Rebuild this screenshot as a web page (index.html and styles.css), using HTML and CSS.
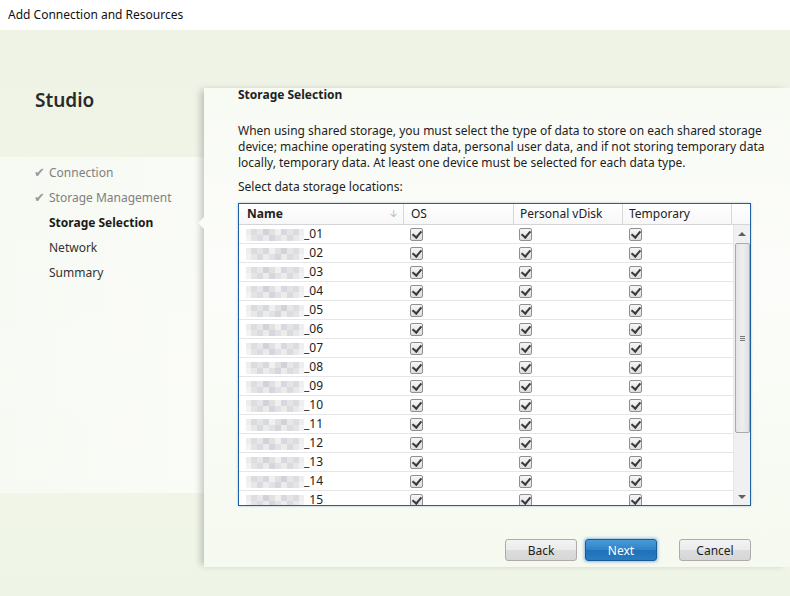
FILE: index.html
```html
<!DOCTYPE html>
<html lang="en">
<head>
    <meta charset="UTF-8">
    <title>Add Connection and Resources</title>
    <link rel="stylesheet" href="styles.css">
</head>
<body>
    <div class="titlebar">Add Connection and Resources</div>

    <div class="wizard">
        <div class="sidebar">
            <h1 class="brand">Studio</h1>
            <ul class="steps">
                <li class="step done">Connection</li>
                <li class="step done">Storage Management</li>
                <li class="step active">Storage Selection</li>
                <li class="step">Network</li>
                <li class="step">Summary</li>
            </ul>
        </div>

        <div class="main">
            <h2 class="page-title">Storage Selection</h2>
            <p class="intro">When using shared storage, you must select the type of data to store on each shared storage<br>device; machine operating system data, personal user data, and if not storing temporary data<br>locally, temporary data. At least one device must be selected for each data type.</p>
            <p class="label">Select data storage locations:</p>

            <div class="grid">
                <div class="grid-head">
                    <div class="col col-name">Name <span class="sort">&#129123;</span></div>
                    <div class="col col-os">OS</div>
                    <div class="col col-pvd">Personal vDisk</div>
                    <div class="col col-temp">Temporary</div>
                    <div class="col col-fill"></div>
                </div>
                <div class="grid-body">
                    <div class="rows" id="rows"></div>
                    <div class="scrollbar">
                        <div class="arrow up"></div>
                        <div class="track">
                            <div class="thumb"><span class="grip"></span></div>
                        </div>
                        <div class="arrow down"></div>
                    </div>
                </div>
            </div>

            <div class="actions">
                <button class="btn">Back</button>
                <button class="btn btn-primary">Next</button>
                <button class="btn btn-cancel">Cancel</button>
            </div>
        </div>
    </div>

    <script>
        const rows = document.getElementById('rows');
        for (let i = 1; i <= 15; i++) {
            const num = String(i).padStart(2, '0');
            const row = document.createElement('div');
            row.className = 'row';
            row.innerHTML = `
                <div class="cell cell-name"><span class="blur blur-${i % 3}"></span>_${num}</div>
                <div class="cell cell-os"><span class="check"></span></div>
                <div class="cell cell-pvd"><span class="check"></span></div>
                <div class="cell cell-temp"><span class="check"></span></div>
            `;
            rows.appendChild(row);
        }
    </script>
</body>
</html>
```

FILE: styles.css
```css
* {
    margin: 0;
    padding: 0;
    box-sizing: border-box;
}

body {
    font-family: 'Noto Sans', 'Open Sans', sans-serif;
    font-size: 12px;
    color: #1e1e1e;
    width: 790px;
    height: 596px;
    overflow: hidden;
    background: #fff;
}

.titlebar {
    height: 30px;
    line-height: 30px;
    padding-left: 8px;
    background: #fff;
    color: #111;
}

.wizard {
    display: flex;
    height: 566px;
    background: linear-gradient(180deg, #eef3e5 0%, #f2f6ec 60%, #eff5e6 100%);
}

/* left column */
.sidebar {
    width: 204px;
    flex-shrink: 0;
    padding-top: 58px;
}

.brand {
    font-size: 19px;
    font-weight: 600;
    color: #2a2a2a;
    padding-left: 35px;
    line-height: 24px;
    height: 69px;
}

.steps {
    list-style: none;
    height: 336px;
    padding-top: 3px;
    background: linear-gradient(90deg, rgba(255,255,255,0.45) 0%, rgba(255,255,255,0.65) 100%);
}

.step {
    position: relative;
    height: 25px;
    line-height: 25px;
    padding-left: 49px;
    color: #333;
}

.step.done {
    color: #808080;
}

.step.done::before {
    content: "\2714";
    position: absolute;
    left: 34px;
    top: 0;
    font-family: 'DejaVu Sans', sans-serif;
    font-size: 13px;
    color: #9a9a9a;
}

.step.active {
    font-weight: 700;
    color: #1a1a1a;
}

.step.active::after {
    content: "";
    position: absolute;
    right: 0;
    top: 7px;
    border-top: 6px solid transparent;
    border-bottom: 6px solid transparent;
    border-right: 6px solid #fbfcf9;
}

/* right panel */
.main {
    flex: 1;
    min-width: 0;
    margin-top: 58px;
    margin-bottom: 29px;
    padding: 0 39px 0 34px;
    background: linear-gradient(180deg, #f8faf4 0%, #fcfdfa 40%, #f5f9ef 100%);
    box-shadow: -5px 0 7px -2px rgba(0, 0, 0, 0.22);
}

.page-title {
    font-size: 12px;
    font-weight: 700;
    color: #222;
    line-height: 14px;
}

.intro {
    margin-top: 21px;
    line-height: 16px;
    white-space: nowrap;
    color: #1e1e1e;
}

.label {
    margin-top: 8px;
    line-height: 16px;
}

.grid {
    margin-top: 8px;
    width: 513px;
    height: 303px;
    border: 1px solid #1f5fa8;
    background: #fff;
    box-shadow: 0 0 2px rgba(31, 95, 168, 0.4);
    display: flex;
    flex-direction: column;
}

.grid-head {
    display: flex;
    height: 21px;
    border-bottom: 1px solid #d5d5d5;
    background: linear-gradient(180deg, #ffffff 0%, #f7f7f7 100%);
}

.col {
    line-height: 20px;
    border-right: 1px solid #d8d8d8;
    color: #222;
}

.col-name {
    width: 165px;
    padding-left: 8px;
    font-weight: 700;
    position: relative;
}

.sort {
    position: absolute;
    right: 6px;
    top: 0;
    font-weight: 400;
    font-size: 10px;
    color: #a0a0a0;
    font-family: 'DejaVu Sans', sans-serif;
}

.col-os {
    width: 110px;
    padding-left: 7px;
}

.col-pvd {
    width: 109px;
    padding-left: 6px;
}

.col-temp {
    width: 109px;
    padding-left: 6px;
}

.col-fill {
    flex: 1;
    border-right: none;
}

.grid-body {
    flex: 1;
    display: flex;
    overflow: hidden;
}

.rows {
    flex: 1;
    overflow: hidden;
}

.row {
    display: flex;
    height: 19px;
    border-bottom: 1px solid #e6e6e6;
}

.cell {
    display: flex;
    align-items: center;
    line-height: 18px;
}

.cell-name {
    width: 165px;
    padding-left: 7px;
    color: #222;
}

.cell-os {
    width: 110px;
    padding-left: 6px;
}

.cell-pvd {
    width: 109px;
    padding-left: 5px;
}

.cell-temp {
    width: 109px;
    padding-left: 6px;
}

.blur {
    display: inline-block;
    width: 58px;
    height: 12px;
    margin-top: 2px;
    opacity: 0.85;
    background:
        linear-gradient(90deg, #eaeaea 0 6px, #d6d9de 6px 12px, #e3e3e3 12px 18px, #c9ccd3 18px 24px, #dcdcdc 24px 30px, #eeeeee 30px 36px, #cfd3da 36px 42px, #e0e0e0 42px 48px, #d3d6dc 48px 54px, #ececec 54px 60px) top / 60px 6px no-repeat,
        linear-gradient(90deg, #f2f2f2 0 6px, #e0e0e0 6px 12px, #d4d7dd 12px 18px, #e8e8e8 18px 24px, #cdd1d8 24px 30px, #dedede 30px 36px, #e9e9e9 36px 42px, #d2d5db 42px 48px, #e4e4e4 48px 54px, #f0f0f0 54px 60px) bottom / 60px 6px no-repeat;
}

.blur-1 {
    filter: hue-rotate(20deg);
}

.blur-2 {
    transform: scaleX(-1);
}

.check {
    position: relative;
    display: inline-block;
    width: 13px;
    height: 13px;
    border: 1px solid #8e8f8f;
    border-radius: 2px;
    background: linear-gradient(180deg, #f6f6f6 0%, #dedede 100%);
}

.check::after {
    content: "";
    position: absolute;
    left: 3px;
    top: 0px;
    width: 4px;
    height: 7px;
    border-right: 2px solid #3a3a3a;
    border-bottom: 2px solid #3a3a3a;
    transform: rotate(40deg);
}

/* scrollbar */
.scrollbar {
    width: 17px;
    display: flex;
    flex-direction: column;
    background: #f0f0f0;
    border-left: 1px solid #e8e8e8;
}

.arrow {
    height: 17px;
    display: flex;
    align-items: center;
    justify-content: center;
}

.arrow.up::before {
    content: "";
    border-left: 4px solid transparent;
    border-right: 4px solid transparent;
    border-bottom: 4px solid #606060;
}

.arrow.down::before {
    content: "";
    border-left: 4px solid transparent;
    border-right: 4px solid transparent;
    border-top: 4px solid #606060;
}

.track {
    flex: 1;
    padding: 1px 0 0 1px;
}

.thumb {
    height: 190px;
    width: 15px;
    border: 1px solid #a9a9a9;
    border-radius: 2px;
    background: linear-gradient(90deg, #e4e4e4 0%, #eeeeee 50%, #e0e0e0 100%);
    display: flex;
    align-items: center;
    justify-content: center;
}

.grip {
    width: 5px;
    height: 5px;
    border-top: 1px solid #777;
    border-bottom: 1px solid #777;
    position: relative;
}

.grip::after {
    content: "";
    position: absolute;
    left: 0;
    right: 0;
    top: 1px;
    border-top: 1px solid #777;
}

/* buttons */
.actions {
    display: flex;
    justify-content: flex-end;
    width: 513px;
    margin-top: 33px;
}

.btn {
    width: 72px;
    height: 22px;
    font-family: inherit;
    font-size: 12px;
    color: #1e1e1e;
    border: 1px solid #acacac;
    border-radius: 3px;
    background: linear-gradient(180deg, #f3f3f3 0%, #ebebeb 50%, #dddddd 51%, #d6d6d6 100%);
    margin-left: 8px;
}

.btn-primary {
    color: #fff;
    border-color: #1b5a97;
    background: linear-gradient(180deg, #4a9ad6 0%, #2f82c7 50%, #1f71b8 51%, #2a7cc0 100%);
    box-shadow: 0 0 3px 1px rgba(60, 140, 210, 0.55);
}

.btn-cancel {
    margin-left: 22px;
}
```
